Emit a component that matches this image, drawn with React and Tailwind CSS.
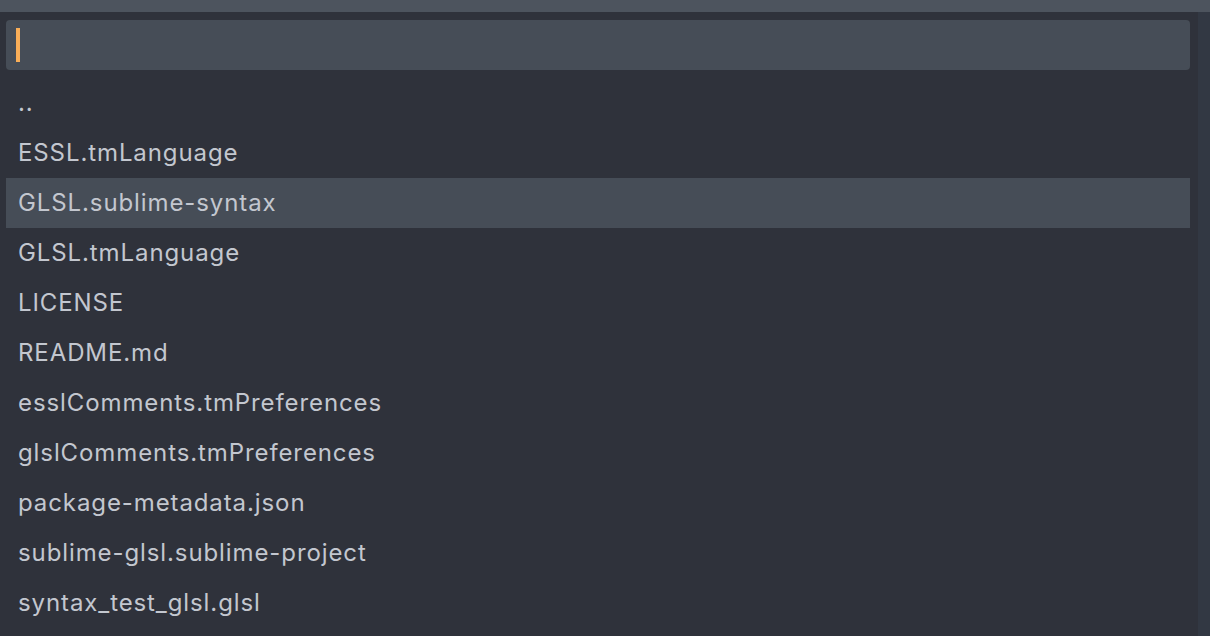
const files = [
  '..',
  'ESSL.tmLanguage',
  'GLSL.sublime-syntax',
  'GLSL.tmLanguage',
  'LICENSE',
  'README.md',
  'esslComments.tmPreferences',
  'glslComments.tmPreferences',
  'package-metadata.json',
  'sublime-glsl.sublime-project',
  'syntax_test_glsl.glsl',
]

export default function App() {
  const selected = 2

  return (
    <div
      className="w-[1210px] h-[636px] overflow-hidden bg-[#2f323b] flex flex-col"
      style={{ fontFamily: 'Inter, "Noto Sans", sans-serif' }}
    >
      <div className="h-[12px] bg-[#4d545e] shrink-0" />
      <div className="flex flex-1 min-h-0">
        <div className="flex-1 flex flex-col pl-[6px] pr-[8px] pt-[8px]">
          <div className="h-[50px] rounded-[4px] bg-[#464d57] flex items-center pl-[10px]">
            <div className="w-[4px] h-[34px] bg-[#f9ae58]" />
          </div>
          <div className="flex flex-col pt-[8px]">
            {files.map((f, i) => (
              <div
                key={f}
                className={`h-[50px] flex items-center pl-[12px] text-[24px] tracking-[0.9px] text-[#c3c7cf] ${i === selected ? 'bg-[#464d57]' : ''}`}
              >
                {f}
              </div>
            ))}
          </div>
        </div>
        <div className="w-[12px] bg-[#323843] shrink-0" />
      </div>
    </div>
  )
}
